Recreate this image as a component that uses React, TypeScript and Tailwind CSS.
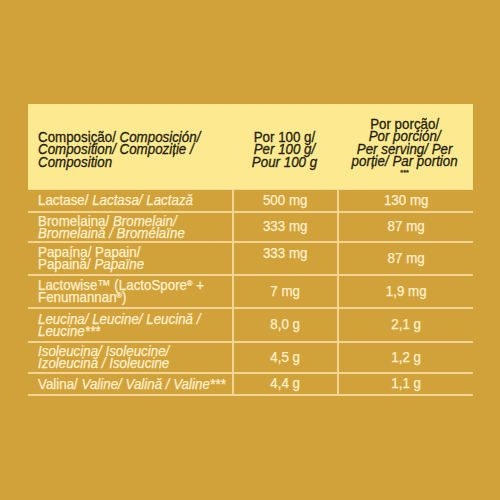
import type { ReactNode } from "react";

const rows = [
  {
    name: (
      <>
        Lactase/ <i>Lactasa/ Lactază</i>
      </>
    ),
    a: "500 mg",
    b: "130 mg",
    h: "h-[23px]",
  },
  {
    name: (
      <>
        Bromelaina/ <i>Bromelain/</i>
        <br />
        <i>Bromelaină / Bromélaïne</i>
      </>
    ),
    a: "333 mg",
    b: "87 mg",
    h: "h-[30px]",
  },
  {
    name: (
      <>
        Papaína/ Papain/
        <br />
        Papaină/ <i>Papaïne</i>
      </>
    ),
    a: "333 mg",
    b: "87 mg",
    h: "h-[33px]",
    aTop: true,
  },
  {
    name: (
      <>
        Lactowise™ (LactoSpore<sup className="text-[8px]">®</sup> +
        <br />
        Fenumannan<sup className="text-[8px]">®</sup>)
      </>
    ),
    a: "7 mg",
    b: "1,9 mg",
    h: "h-[33px]",
  },
  {
    name: (
      <i>
        Leucina/ Leucine/ Leucină /
        <br />
        Leucine***
      </i>
    ),
    a: "8,0 g",
    b: "2,1 g",
    h: "h-[34px]",
  },
  {
    name: (
      <i>
        Isoleucina/ Isoleucine/
        <br />
        Izoleucină / Isoleucine
      </i>
    ),
    a: "4,5 g",
    b: "1,2 g",
    h: "h-[31px]",
  },
  {
    name: (
      <>
        Valina/ <i>Valine/ Valină / Valine***</i>
      </>
    ),
    a: "4,4 g",
    b: "1,1 g",
    h: "h-[22px]",
  },
];

// slightly condensed look: Liberation Sans squeezed horizontally
function Narrow({ children, left }: { children: ReactNode; left?: boolean }) {
  return (
    <span
      className={`inline-block whitespace-nowrap scale-x-[0.92] ${left ? "origin-left" : "origin-center"}`}
    >
      {children}
    </span>
  );
}

export default function App() {
  return (
    <div
      className="w-[500px] h-[500px] bg-[#d2a23a] pt-[104px] pl-[28px]"
      style={{ fontFamily: '"Liberation Sans", Arial, sans-serif' }}
    >
      <div className="w-[445px]">
        {/* Header */}
        <div className="grid grid-cols-[204px_105px_136px] h-[86px] bg-[#fde98f] text-[#231c0e] text-[14.5px] leading-[12.4px] border-b border-[#f3d89c] [-webkit-text-stroke:0.3px_#231c0e]">
          <div className="flex items-center pl-[10px] pt-[6px]">
            <Narrow left>
              Composição/ <i>Composición/</i>
              <br />
              <i>Composition/ Compoziție /</i>
              <br />
              <i>Composition</i>
            </Narrow>
          </div>
          <div className="flex items-center justify-center text-center pt-[6px]">
            <Narrow>
              Por 100 g/
              <br />
              <i>Per 100 g/</i>
              <br />
              <i>Pour 100 g</i>
            </Narrow>
          </div>
          <div className="flex items-start justify-center text-center pt-[14px]">
            <Narrow>
              Por porção/
              <br />
              <i>Por porción/</i>
              <br />
              <i>Per serving/ Per</i>
              <br />
              <i>porție/ Par portion</i>
              <br />
              <span className="text-[8px] leading-[9px] block">***</span>
            </Narrow>
          </div>
        </div>

        {/* Rows */}
        {rows.map((r, i) => (
          <div
            key={i}
            className={`grid grid-cols-[204px_105px_136px] ${r.h} border-b-2 border-[#f1d597] text-[#fdf1cf] text-[14.5px] leading-[11.8px] [-webkit-text-stroke:0.25px_#fdf1cf]`}
          >
            <div className="flex items-center pl-[10px] pt-[1px]">
              <Narrow left>{r.name}</Narrow>
            </div>
            <div
              className={`flex justify-center border-l-2 border-[#f1d597] ${
                r.aTop ? "items-start pt-[5px]" : "items-center"
              }`}
            >
              <Narrow>{r.a}</Narrow>
            </div>
            <div className="flex items-center justify-center border-l-2 border-[#f1d597]">
              <Narrow>{r.b}</Narrow>
            </div>
          </div>
        ))}
      </div>
    </div>
  );
}
